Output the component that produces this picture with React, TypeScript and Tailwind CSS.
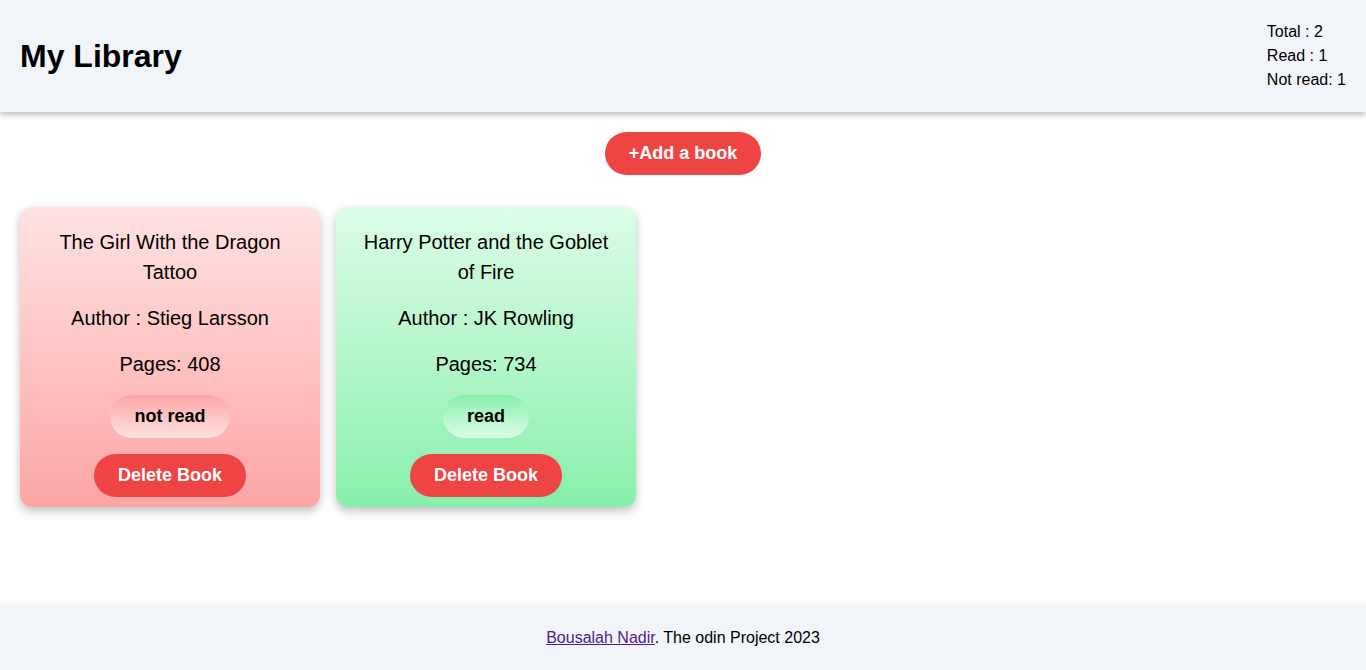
import React from "react";

type Book = { title: string; author: string; pages: number; read: boolean };

const books: Book[] = [
  { title: "The Girl With the Dragon Tattoo", author: "Stieg Larsson", pages: 408, read: false },
  { title: "Harry Potter and the Goblet of Fire", author: "JK Rowling", pages: 734, read: true },
];

function Card({ b }: { b: Book }) {
  return (
    <div
      className={
        "w-[300px] h-[300px] rounded-xl flex flex-col items-center gap-4 pt-5 px-5 text-center shadow-[0_4px_10px_rgba(0,0,0,0.25)] " +
        (b.read ? "bg-gradient-to-b from-[#dcfce7] to-[#86efac]" : "bg-gradient-to-b from-[#fee2e2] to-[#fca5a5]")
      }
    >
      <div className="text-[20px] leading-[30px]">{b.title}</div>
      <div className="text-[20px] leading-[30px]">Author : {b.author}</div>
      <div className="text-[20px] leading-[30px]">Pages: {b.pages}</div>
      <button
        className={
          "rounded-full px-6 py-2 text-lg leading-[27px] font-bold " +
          (b.read ? "bg-gradient-to-b from-[#86efac] to-[#dcfce7]" : "bg-gradient-to-b from-[#fca5a5] to-[#fee2e2]")
        }
      >
        {b.read ? "read" : "not read"}
      </button>
      <button className="rounded-full px-6 py-2 text-lg leading-[27px] font-bold text-white bg-[#ef4444]">
        Delete Book
      </button>
    </div>
  );
}

export default function App() {
  return (
    <div
      className="min-h-screen flex flex-col bg-white text-black"
      style={{ fontFamily: '"Liberation Sans", Arial, sans-serif' }}
    >
      <header className="h-[112px] bg-[#f1f5f9] flex items-center justify-between px-5 shadow-[0_3px_6px_rgba(0,0,0,0.25)] relative z-10">
        <h1 className="text-[32px] font-bold">My Library</h1>
        <div className="text-base leading-6">
          <div>Total : 2</div>
          <div>Read : 1</div>
          <div>Not read: 1</div>
        </div>
      </header>
      <main className="flex flex-col">
        <div className="flex justify-center mt-5">
          <button className="rounded-full px-6 py-2 text-lg leading-[27px] font-bold text-white bg-[#ef4444]">
            +Add a book
          </button>
        </div>
        <div className="flex gap-4 px-5 mt-8">
          {books.map((b) => (
            <Card key={b.title} b={b} />
          ))}
        </div>
      </main>
      <footer className="mt-auto bg-[#f1f5f9] pt-[22px] pb-[20px] text-center text-base leading-6 shadow-[0_-2px_6px_rgba(0,0,0,0.04)]">
        <a href="#" className="text-[#551a8b] underline">Bousalah Nadir</a>. The odin Project 2023
      </footer>
    </div>
  );
}
